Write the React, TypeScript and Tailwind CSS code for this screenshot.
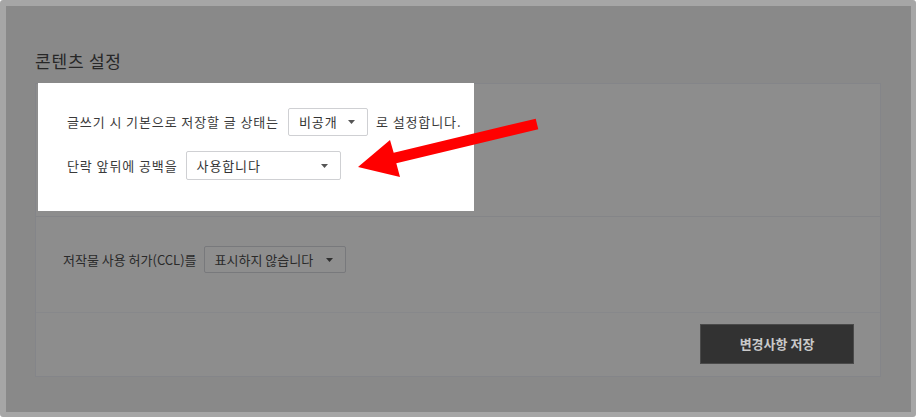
import React from "react";

const font = { fontFamily: '"Noto Sans CJK KR", "Noto Sans", sans-serif' };

function Caret({ color }: { color: string }) {
  return (
    <svg width="7" height="4" viewBox="0 0 7 4" className="shrink-0">
      <polygon points="0,0 7,0 3.5,4" fill={color} />
    </svg>
  );
}

function Select({
  label,
  width,
  height,
  light,
}: {
  label: string;
  width: string;
  height: string;
  light?: boolean;
}) {
  return (
    <div
      className={`${width} ${height} flex items-center justify-between rounded-[2px] border pl-[10px] pr-[12px] text-[13px] ${
        light
          ? "border-[#cfd0d3] bg-white text-[#333]"
          : "border-[#78797c] bg-[#8e8e8e] text-[#2a2a2a]"
      }`}
    >
      <span>{label}</span>
      <Caret color={light ? "#555" : "#2f2f2f"} />
    </div>
  );
}

export default function App() {
  return (
    <div className="relative h-[419px] w-[918px] bg-white" style={font}>
      <div className="h-[417px] w-[916px] rounded-[3px] border-t-[6px] border-l-[6px] border-r-[5px] border-b-[5px] border-[#a6a6a6] bg-[#898989] pl-[29px] pt-[43px]">
        <h2 className="mb-[10px] text-[17px] leading-[24px] tracking-[0.8px] text-[#272727]">콘텐츠 설정</h2>

        <div className="w-[846px] border border-[#848589] bg-[#8d8d8d]">
          {/* section 1 - highlighted */}
          <div className="h-[133px]">
            <div className="relative -mt-px ml-[2px] h-[128px] w-[436px] bg-white pl-[29px] pt-[25px] text-[13px] tracking-[0.9px] text-[#3a3a3a]">
              <div className="flex items-center">
                <span>글쓰기 시 기본으로 저장할 글 상태는</span>
                <div className="ml-[9px]">
                  <Select label="비공개" width="w-[80px]" height="h-[28px]" light />
                </div>
                <span className="ml-[8px]">로 설정합니다.</span>
              </div>
              <div className="mt-[15px] flex items-center">
                <span>단락 앞뒤에 공백을</span>
                <div className="ml-[8px]">
                  <Select label="사용합니다" width="w-[155px]" height="h-[29px]" light />
                </div>
              </div>
            </div>
          </div>

          {/* section 2 */}
          <div className="h-[96px] border-t border-[#848588] pl-[27px] pt-[29px] text-[13px] text-[#2a2a2a]">
            <div className="flex items-center">
              <span>저작물 사용 허가(CCL)를</span>
              <div className="ml-[7px]">
                <Select label="표시하지 않습니다" width="w-[142px]" height="h-[27px]" />
              </div>
            </div>
          </div>

          {/* section 3 */}
          <div className="flex h-[64px] justify-end border-t border-[#87888b] pr-[26px] pt-[11px]">
            <button className="h-[40px] w-[154px] border border-[#4a4a4a] bg-[#323232] text-[13px] font-bold text-[#c9c9c9]">
              변경사항 저장
            </button>
          </div>
        </div>
      </div>

      {/* red annotation arrow */}
      <svg
        className="pointer-events-none absolute left-0 top-0"
        width="918"
        height="419"
        viewBox="0 0 918 419"
      >
        <polygon
          points="358,167 390,140 393.7,152.7 535.7,118.7 538.3,129.3 396.3,163.3 400,177"
          fill="#ff0000"
        />
      </svg>
    </div>
  );
}
